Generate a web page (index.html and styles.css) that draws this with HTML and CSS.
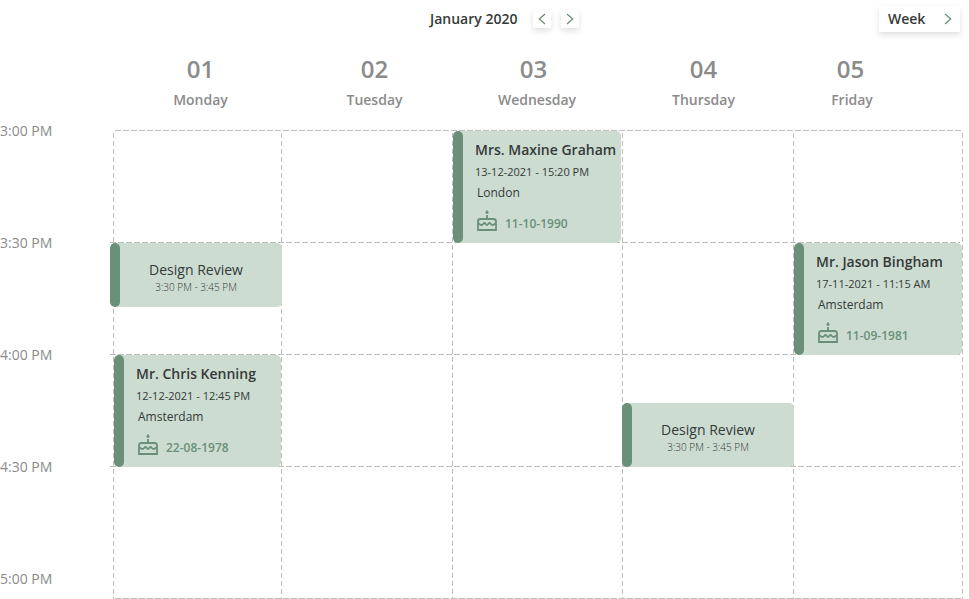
FILE: index.html
```html
<!DOCTYPE html>
<html lang="en">
<head>
<meta charset="utf-8">
<title>Calendar</title>
<link rel="stylesheet" href="styles.css">
</head>
<body>
<svg class="defs" aria-hidden="true">
  <symbol id="cake" viewBox="0 0 20 21">
    <path d="M1 20V11.500Q1 9 3.500 9H16.500Q19 9 19 11.500V20ZM1 13.500C2.500 13.500 3 15 4.500 15S6.500 13 7.500 13S9 15 10 15S11.500 13 12.500 13S14 15 15.500 15S17.500 13.500 19 13.500M10 9V5" fill="none" stroke="currentColor" stroke-width="1.800"/>
    <path d="M10 0L11.700 2.300Q11.500 4 10 4T8.300 2.300Z" fill="currentColor"/>
  </symbol>
  <symbol id="next" viewBox="0 0 8 12"><path d="M1 1L6.700 6L1 11" fill="none" stroke="currentColor" stroke-width="1.300"/></symbol>
</svg>
<main class="calendar">
  <header class="toolbar">
    <h1 class="month">January 2020</h1>
    <button class="step prev" aria-label="Previous"><svg class="chevron"><use href="#next"/></svg></button>
    <button class="step" aria-label="Next"><svg class="chevron"><use href="#next"/></svg></button>
    <button class="view">Week<svg class="chevron"><use href="#next"/></svg></button>
  </header>
  <section class="days">
    <div class="day"><b>01</b><span>Monday</span></div>
    <div class="day"><b>02</b><span>Tuesday</span></div>
    <div class="day wednesday"><b>03</b><span>Wednesday</span></div>
    <div class="day"><b>04</b><span>Thursday</span></div>
    <div class="day friday"><b>05</b><span>Friday</span></div>
  </section>
  <section class="schedule">
    <div class="times"><span>3:00 PM</span><span>3:30 PM</span><span>4:00 PM</span><span>4:30 PM</span><span>5:00 PM</span></div>
    <div class="board">
      <i class="line row r2"></i><i class="line row r3"></i><i class="line row r4"></i>
      <div class="column">
        <article class="event review monday"><h2>Design Review</h2><p>3:30 PM - 3:45 PM</p></article>
        <article class="event person chris"><h2>Mr. Chris Kenning</h2><p>12-12-2021 - 12:45 PM</p><p class="city">Amsterdam</p><div class="birth"><svg class="cake"><use href="#cake"/></svg><span>22-08-1978</span></div></article>
      </div>
      <div class="column"></div>
      <div class="column">
        <article class="event person"><h2>Mrs. Maxine Graham</h2><p>13-12-2021 - 15:20 PM</p><p class="city">London</p><div class="birth"><svg class="cake"><use href="#cake"/></svg><span>11-10-1990</span></div></article>
      </div>
      <div class="column">
        <article class="event review thursday"><h2>Design Review</h2><p>3:30 PM - 3:45 PM</p></article>
      </div>
      <div class="column">
        <article class="event person jason"><h2>Mr. Jason Bingham</h2><p>17-11-2021 - 11:15 AM</p><p class="city">Amsterdam</p><div class="birth"><svg class="cake"><use href="#cake"/></svg><span>11-09-1981</span></div></article>
      </div>
    </div>
  </section>
</main>
</body>
</html>
```
FILE: styles.css
```css
* { box-sizing: border-box; margin: 0; padding: 0; }
body { width: 969px; height: 599px; overflow: hidden; background: #fff; font-family: "Open Sans", sans-serif; color: #353a38; }
.defs { position: absolute; width: 0; height: 0; }
.calendar { width: 969px; }
.toolbar { display: flex; align-items: center; height: 38px; padding: 0 9px 0 430px; }
.month { font-size: 14px; line-height: 20px; font-weight: 600; width: 103px; white-space: nowrap; }
button { border: 0; background: #fff; font: 600 14px/20px "Open Sans", sans-serif; color: #353a38; box-shadow: 0 3px 6px rgba(0,0,0,.12); }
.step { width: 18px; height: 18px; margin-right: 10px; display: flex; align-items: center; justify-content: center; }
.prev svg { transform: scaleX(-1); }
.chevron { width: 8px; height: 12px; color: #6b9079; }
.view { display: flex; align-items: center; justify-content: space-between; width: 81px; height: 26px; margin-left: auto; padding: 0 8px 0 9px; }
.days { display: grid; grid-template-columns: 175px 173px 145px 195px 99px; height: 92px; padding-left: 113px; color: #8b8b8b; }
.day { display: flex; flex-direction: column; align-items: center; font-weight: 600; }
.day b { margin-top: 14px; font-size: 24px; line-height: 34px; font-weight: 600; }
.day span { margin-top: 4px; font-size: 14px; line-height: 20px; }
.wednesday span { margin-left: 7px; }
.friday span { margin-left: 3px; }
.schedule { display: grid; grid-template-columns: 113px 850px; height: 469px; }
.times { display: grid; grid-template-rows: repeat(4, 112px) 20px; font-size: 14px; line-height: 20px; color: #8b8b8b; margin-top: -9px; }
.board { --line: #bdbdbd; display: grid; grid-template-columns: 168px 171px 170px 171px 170px; grid-template-rows: 112px 112px 112px 133px;
  background: repeating-linear-gradient(90deg, var(--line) 0 6px, transparent 6px 8px) 2px 0 / 100% 1px no-repeat,
    repeating-linear-gradient(90deg, var(--line) 0 6px, transparent 6px 8px) 2px 100% / 100% 1px no-repeat,
    repeating-linear-gradient(var(--line) 0 5px, transparent 5px 8px) 100% 3px / 1px 100% no-repeat; }
.column { grid-row: 1 / -1; min-width: 0; background: repeating-linear-gradient(var(--line) 0 5px, transparent 5px 8px) 0 3px / 1px 100% no-repeat; }
.column:nth-of-type(1) { grid-column: 1; }
.column:nth-of-type(2) { grid-column: 2; }
.column:nth-of-type(3) { grid-column: 3; }
.column:nth-of-type(4) { grid-column: 4; }
.column:nth-of-type(5) { grid-column: 5; }
.row { grid-column: 1 / -1; height: 1px; margin-left: -3px; margin-right: 3px; background: repeating-linear-gradient(90deg, var(--line) 0 6px, transparent 6px 8px); }
.r2 { grid-row: 2; }
.r3 { grid-row: 3; }
.r4 { grid-row: 4; }
.event { background: linear-gradient(#ccdcd1, #ccdcd1) 5px 0 no-repeat; border-radius: 5px; position: relative; }
.event::before { content: ""; position: absolute; inset: 0 auto 0 0; width: 10px; border-radius: 5px; background: #6b9079; }
.person { height: 112px; width: 168px; margin: 1px 0 0 1px; padding: 9px 0 0 22px; white-space: nowrap; }
.person h2 { font-size: 14px; line-height: 20px; font-weight: 600; }
.person p { font-size: 11px; line-height: 16px; margin-top: 4px; }
.person .city { font-size: 12px; line-height: 18px; margin: 4px 0 0 2px; }
.birth { display: flex; align-items: center; height: 21px; margin: 8px 0 0 2px; gap: 8px; font-size: 12px; line-height: 18px; font-weight: 600; color: #6b9079; }
.birth span { padding-top: 6px; }
.cake { width: 20px; height: 21px; }
.review { height: 64px; width: 172px; padding-top: 17px; text-align: center; }
.review h2 { font-size: 14px; line-height: 20px; font-weight: 400; }
.review p { font-size: 10px; line-height: 14px; font-weight: 300; }
.monday { margin: 113px 0 0 -3px; }
.chris { width: 167px; margin-top: 48px; }
.thursday { margin-top: 273px; }
.jason { margin-top: 113px; }
```
